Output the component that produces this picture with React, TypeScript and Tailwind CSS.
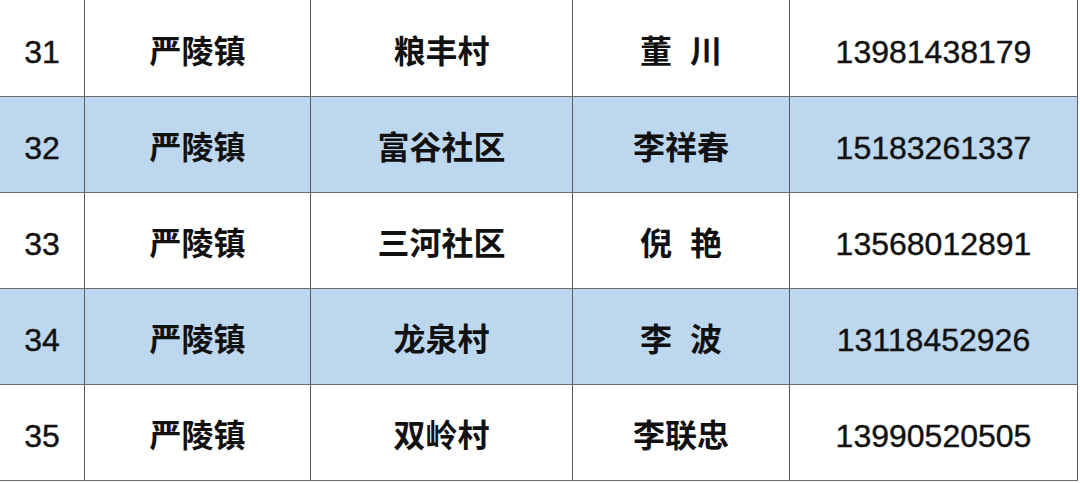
const rows = [
  { no: '31', town: '严陵镇', village: '粮丰村', name: '董  川', phone: '13981438179' },
  { no: '32', town: '严陵镇', village: '富谷社区', name: '李祥春', phone: '15183261337' },
  { no: '33', town: '严陵镇', village: '三河社区', name: '倪  艳', phone: '13568012891' },
  { no: '34', town: '严陵镇', village: '龙泉村', name: '李  波', phone: '13118452926' },
  { no: '35', town: '严陵镇', village: '双岭村', name: '李联忠', phone: '13990520505' },
]

const cell = 'flex items-center justify-center border-r border-[#5a5a5a] h-full pt-[7px] whitespace-pre'
const cjk = 'font-bold text-[32px] [font-family:"Liberation_Sans","Noto_Sans_CJK_SC",sans-serif]'
const num = 'text-[32px] [font-family:"Liberation_Sans",Arial,sans-serif] [-webkit-text-stroke:0.4px_#111]'

export default function App() {
  return (
    <div className="w-[1080px] h-[483px] bg-white text-[#111] overflow-hidden">
      <div className="w-[1078px]">
        {rows.map((row, index) => (
          <div
            key={row.no}
            className={`grid grid-cols-[85px_226px_262px_217px_288px] border-b border-[#6b6b6b] ${
              index === 0 ? 'h-[97px]' : 'h-[96px]'
            } ${index % 2 === 1 ? 'bg-[#bdd7ee]' : 'bg-white'}`}
          >
            <div className={`${cell} ${num}`}>{row.no}</div>
            <div className={`${cell} ${cjk}`}>{row.town}</div>
            <div className={`${cell} ${cjk}`}>{row.village}</div>
            <div className={`${cell} ${cjk}`}>{row.name}</div>
            <div className={`${cell} ${num}`}>{row.phone}</div>
          </div>
        ))}
      </div>
    </div>
  )
}
